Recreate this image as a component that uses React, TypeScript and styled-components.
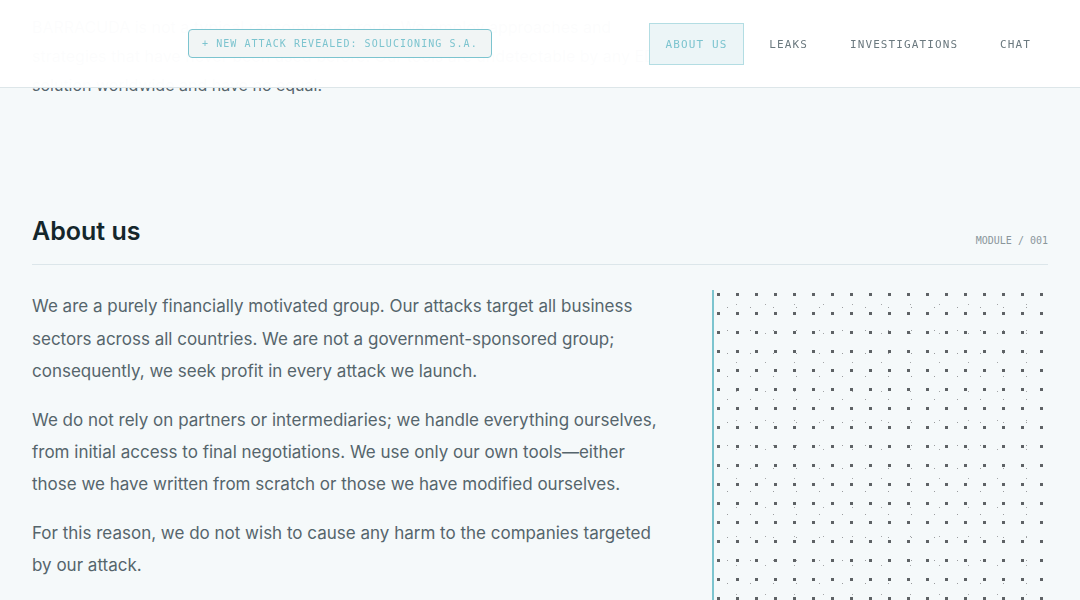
import styled, { createGlobalStyle } from 'styled-components';

const MONO = `"DejaVu Sans Mono", "Liberation Mono", monospace`;
const SANS = `Inter, "Noto Sans", sans-serif`;
const ACCENT = '#7cc4cf';

const GlobalStyle = createGlobalStyle`
  html, body {
    margin: 0;
    padding: 0;
    background: #f5f9fa;
    font-family: ${SANS};
    color: #4f5f66;
  }
  * {
    box-sizing: border-box;
  }
`;

const Header = styled.header`
  position: fixed;
  top: 0;
  left: 0;
  right: 0;
  z-index: 10;
  height: 88px;
  padding: 0 32px;
  display: flex;
  align-items: center;
  gap: 32px;
  background: rgba(255, 255, 255, 0.985);
  border-bottom: 1px solid #dde6e9;
`;

const BrandSlot = styled.div`
  width: 124px;
  height: 40px;
`;

const Badge = styled.a`
  display: inline-flex;
  align-items: center;
  height: 29px;
  padding: 0 13px;
  border: 1px solid ${ACCENT};
  border-radius: 4px;
  background: rgba(240, 244, 244, 0.9);
  font-family: ${MONO};
  font-size: 10px;
  letter-spacing: 0.105em;
  color: ${ACCENT};
  white-space: nowrap;
  margin-top: -1px;
`;

const Nav = styled.nav`
  margin-left: auto;
  display: flex;
  align-items: center;
  gap: 8px;
`;

const NavItem = styled.a<{ $active?: boolean }>`
  display: inline-flex;
  align-items: center;
  height: 42px;
  padding: 0 16px;
  font-family: ${MONO};
  font-size: 11px;
  letter-spacing: 0.1em;
  color: ${(p) => (p.$active ? ACCENT : '#6b797f')};
  background: ${(p) => (p.$active ? '#ecf5f7' : 'transparent')};
  border: 1px solid ${(p) => (p.$active ? '#b3dde3' : 'transparent')};
  margin-top: 1px;
`;

const Main = styled.main`
  padding: 0 32px;
`;

const HeroTail = styled.section`
  padding-top: 13px;
  padding-bottom: 116px;
`;

const HeroText = styled.p`
  margin: 0;
  max-width: 640px;
  font-size: 16px;
  line-height: 28.8px;
  color: #56656c;
`;

const AboutSection = styled.section``;

const SectionHead = styled.div`
  display: flex;
  justify-content: space-between;
  align-items: flex-end;
  padding-bottom: 17px;
  border-bottom: 1px solid #dce6ea;
`;

const Title = styled.h2`
  margin: 0;
  font-size: 25px;
  line-height: 32px;
  font-weight: 600;
  color: #14262b;
`;

const ModuleTag = styled.span`
  font-family: ${MONO};
  font-size: 10px;
  letter-spacing: 0;
  color: #8a969b;
  margin-bottom: 1px;
`;

const Body = styled.div`
  display: grid;
  grid-template-columns: 1fr 336px;
  gap: 48px;
  margin-top: 25px;
`;

const Copy = styled.div`
  display: flex;
  flex-direction: column;
  gap: 16px;
`;

const Para = styled.p`
  margin: 0;
  font-size: 17px;
  line-height: 32.4px;
  color: #55656c;
`;

const Visual = styled.div`
  border-left: 2px solid ${ACCENT};
  height: 360px;
  overflow: hidden;
`;

const DotField = () => (
  <svg width="334" height="360" style={{ display: 'block' }}>
    <defs>
      <pattern id="big" width="19" height="19" patternUnits="userSpaceOnUse">
        <rect x="3" y="3" width="3" height="3" fill="#5e6265" />
      </pattern>
      <pattern id="mid" width="23" height="23" patternUnits="userSpaceOnUse">
        <rect x="13" y="17" width="1" height="1" fill="#9a9c9e" />
      </pattern>
      <pattern id="fine" width="29" height="29" patternUnits="userSpaceOnUse">
        <rect x="22" y="14" width="1" height="1" fill="#a4a6a8" />
      </pattern>
    </defs>
    <rect width="334" height="360" fill="url(#fine)" />
    <rect width="334" height="360" fill="url(#mid)" />
    <rect width="334" height="360" fill="url(#big)" />
  </svg>
);

const NAV = ['ABOUT US', 'LEAKS', 'INVESTIGATIONS', 'CHAT'];

export default function App() {
  return (
    <>
      <GlobalStyle />
      <Header>
        <BrandSlot />
        <Badge>+ NEW ATTACK REVEALED: SOLUCIONING S.A.</Badge>
        <Nav>
          {NAV.map((item, i) => (
            <NavItem key={item} $active={i === 0}>
              {item}
            </NavItem>
          ))}
        </Nav>
      </Header>
      <Main>
        <HeroTail>
          <HeroText>
            BARRACUDA is not a typical ransomware group. We employ approaches and
            strategies that have never been used before. Our tools are undetectable by
            any EDR solution worldwide and have no equal.
          </HeroText>
        </HeroTail>
        <AboutSection>
          <SectionHead>
            <Title>About us</Title>
            <ModuleTag>MODULE / 001</ModuleTag>
          </SectionHead>
          <Body>
            <Copy>
              <Para>
                We are a purely financially motivated group. Our attacks target all
                business sectors across all countries. We are not a
                government-sponsored group; consequently, we seek profit in every
                attack we launch.
              </Para>
              <Para>
                We do not rely on partners or intermediaries; we handle everything
                ourselves, from initial access to final negotiations. We use only our
                own tools—either those we have written from scratch or those we have
                modified ourselves.
              </Para>
              <Para>
                For this reason, we do not wish to cause any harm to the companies
                targeted by our attack.
              </Para>
            </Copy>
            <Visual>
              <DotField />
            </Visual>
          </Body>
        </AboutSection>
      </Main>
    </>
  );
}
